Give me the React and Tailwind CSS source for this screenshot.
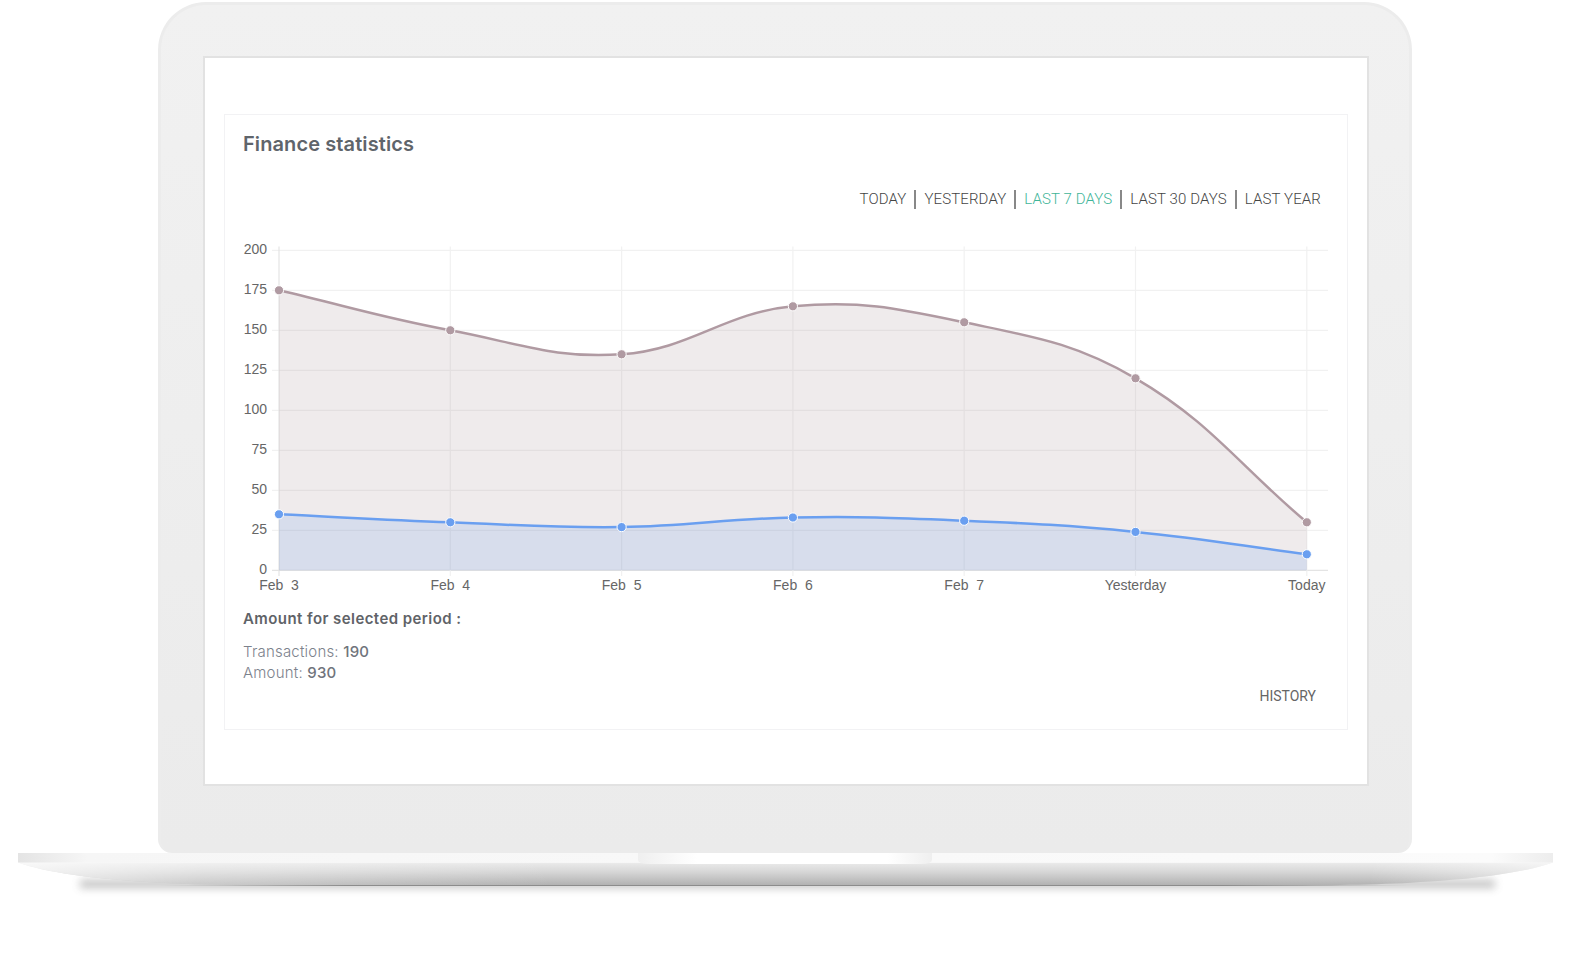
import React from 'react';

const sans = 'font-["Liberation_Sans",Arial,sans-serif]';

const tabs = ['TODAY', 'YESTERDAY', 'LAST 7 DAYS', 'LAST 30 DAYS', 'LAST YEAR'];
const yTicks = [200, 175, 150, 125, 100, 75, 50, 25, 0];
const labels = ['Feb  3', 'Feb  4', 'Feb  5', 'Feb  6', 'Feb  7', 'Yesterday', 'Today'];
const amounts = [175, 150, 135, 165, 155, 120, 30];
const counts = [35, 30, 27, 33, 31, 24, 10];

const xAt = (i) => 279 + i * 171.3;
const yAt = (v) => 570.3 - v * 1.6;

// same spline chart.js draws with tension 0.4
function linePath(values) {
    const pts = values.map((v, i) => ({ x: xAt(i), y: yAt(v) }));
    const ctrl = pts.map((p, i) => {
        const prev = pts[i - 1] || p;
        const next = pts[i + 1] || p;
        const d01 = Math.hypot(p.x - prev.x, p.y - prev.y);
        const d12 = Math.hypot(next.x - p.x, next.y - p.y);
        const s01 = d01 / (d01 + d12 || 1);
        const s12 = d12 / (d01 + d12 || 1);
        return {
            inX: p.x - 0.4 * s01 * (next.x - prev.x),
            inY: p.y - 0.4 * s01 * (next.y - prev.y),
            outX: p.x + 0.4 * s12 * (next.x - prev.x),
            outY: p.y + 0.4 * s12 * (next.y - prev.y),
        };
    });
    let d = `M${pts[0].x} ${pts[0].y}`;
    for (let i = 1; i < pts.length; i++) {
        d += ` C${ctrl[i - 1].outX} ${ctrl[i - 1].outY} ${ctrl[i].inX} ${ctrl[i].inY} ${pts[i].x} ${pts[i].y}`;
    }
    return d;
}

const areaPath = (values) => `${linePath(values)} L${xAt(6)} ${yAt(0)} L${xAt(0)} ${yAt(0)} Z`;

const Chart = () => (
    <svg viewBox="225 240 1122 360" className="block w-[1122px] h-[360px]">
        {yTicks.map((t) => (
            <g key={t}>
                <line x1="272" x2="1328" y1={yAt(t)} y2={yAt(t)} stroke={t === 0 ? '#e4e4e4' : '#f1f1f1'} strokeWidth="1.2" />
                <text x="267" y={yAt(t) + 3.5} textAnchor="end" fontSize="14" fill="#666" fontFamily="Liberation Sans, Arial, sans-serif">{t}</text>
            </g>
        ))}
        {labels.map((l, i) => (
            <g key={l}>
                <line x1={xAt(i)} x2={xAt(i)} y1="246.5" y2="576" stroke={i === 0 ? '#e4e4e4' : '#f1f1f1'} strokeWidth="1.2" />
                <text x={xAt(i)} y="590" textAnchor="middle" fontSize="14" fill="#666" fontFamily="Liberation Sans, Arial, sans-serif" className="whitespace-pre">{l}</text>
            </g>
        ))}
        <path d={areaPath(amounts)} fill="#b09aa2" fillOpacity="0.2" />
        <path d={areaPath(counts)} fill="#6a9ff0" fillOpacity="0.18" />
        <path d={linePath(amounts)} fill="none" stroke="#b09aa2" strokeWidth="2.5" />
        <path d={linePath(counts)} fill="none" stroke="#6a9ff0" strokeWidth="2.5" />
        {amounts.map((v, i) => (
            <circle key={i} cx={xAt(i)} cy={yAt(v)} r="4.6" fill="#b09aa2" stroke="#fff" strokeWidth="1" />
        ))}
        {counts.map((v, i) => (
            <circle key={i} cx={xAt(i)} cy={yAt(v)} r="4.6" fill="#6a9ff0" stroke="#fff" strokeWidth="1" />
        ))}
    </svg>
);

const LaptopBase = () => (
    <svg viewBox="0 853 1577 117" className="block w-[1577px] h-[117px]">
        <defs>
            <linearGradient id="baseFace" x1="0" y1="862" x2="0" y2="885" gradientUnits="userSpaceOnUse">
                <stop offset="0" stopColor="#ececec" />
                <stop offset="0.4" stopColor="#d8d8d8" />
                <stop offset="1" stopColor="#b2b2b2" />
            </linearGradient>
            <linearGradient id="baseEnds" x1="18" y1="0" x2="1553" y2="0" gradientUnits="userSpaceOnUse">
                <stop offset="0" stopColor="#fff" stopOpacity="0.7" />
                <stop offset="0.12" stopColor="#fff" stopOpacity="0.3" />
                <stop offset="0.35" stopColor="#fff" stopOpacity="0" />
                <stop offset="0.88" stopColor="#fff" stopOpacity="0" />
                <stop offset="1" stopColor="#fff" stopOpacity="0.55" />
            </linearGradient>
            <linearGradient id="baseLine" x1="160" y1="0" x2="1411" y2="0" gradientUnits="userSpaceOnUse">
                <stop offset="0" stopColor="#999" stopOpacity="0" />
                <stop offset="0.15" stopColor="#8c8c8c" />
                <stop offset="0.85" stopColor="#8c8c8c" />
                <stop offset="1" stopColor="#999" stopOpacity="0" />
            </linearGradient>
            <linearGradient id="baseStrip" x1="18" y1="0" x2="1553" y2="0" gradientUnits="userSpaceOnUse">
                <stop offset="0" stopColor="#e4e4e4" />
                <stop offset="0.045" stopColor="#f6f6f6" />
                <stop offset="0.96" stopColor="#fbfbfb" />
                <stop offset="1" stopColor="#ededed" />
            </linearGradient>
            <linearGradient id="notch" x1="638" y1="0" x2="932" y2="0" gradientUnits="userSpaceOnUse">
                <stop offset="0" stopColor="#efefef" />
                <stop offset="0.2" stopColor="#fff" />
                <stop offset="0.85" stopColor="#fff" />
                <stop offset="1" stopColor="#efefef" />
            </linearGradient>
            <filter id="blur" x="-5%" y="-300%" width="110%" height="700%">
                <feGaussianBlur stdDeviation="4.5" />
            </filter>
        </defs>
        <rect x="80" y="880" width="1415" height="8" fill="#777" opacity="0.45" filter="url(#blur)" />
        <path d="M18 862.5 C45 872 90 879 160 882.7 C200 885 260 885.5 300 885.5 H1270 C1310 885.5 1370 885 1411 882.7 C1481 879 1526 872 1553 862.5 Z" fill="url(#baseFace)" />
        <path d="M18 862.5 C45 872 90 879 160 882.7 C200 885 260 885.5 300 885.5 H1270 C1310 885.5 1370 885 1411 882.7 C1481 879 1526 872 1553 862.5 Z" fill="url(#baseEnds)" />
        <path d="M160 885.5 H1411" stroke="url(#baseLine)" strokeWidth="1" />
        <rect x="18" y="853" width="1535" height="9.5" fill="url(#baseStrip)" />
        <path d="M638 853 H932 V860 Q932 864 920 864 H650 Q638 864 638 860 Z" fill="url(#notch)" />
    </svg>
);

export default function App() {
    return (
        <div className={`w-[1577px] h-[970px] bg-white overflow-hidden pt-[2px] ${sans}`}>
            <div className="ml-[158px] w-[1254px] h-[851px] rounded-t-[48px] rounded-b-[14px] border-[3px] border-b-0 border-[#ececec] bg-linear-to-b from-[#f1f1f1] to-[#ebebeb] pt-[51px] pl-[42px]">
                <div className="w-[1166px] h-[730px] border-2 border-[#e2e2e2] bg-white pt-[56px] pl-[19px]">
                    <div className="w-[1124px] h-[616px] border border-[#f2f2f4] pt-[15px]">
                        <h2 className="pl-[18px] h-[28px] font-['Inter',sans-serif] font-semibold text-[20px] tracking-[0.1px] leading-[28px] text-[#5f656b]">
                            Finance statistics
                        </h2>
                        <div className="mt-[31px] pr-[26px] flex justify-end font-['Roboto',sans-serif] font-light text-[15px] tracking-[0.12px] leading-[20px] h-[20px] text-[#444]">
                            {tabs.map((tab, i) => (
                                <span
                                    key={tab}
                                    className={`flex items-center ${i === 2 ? 'text-[#3fb599]' : ''}`}
                                >
                                    {tab}
                                    {i < tabs.length - 1 && <span className="mx-[8px] w-[2px] h-[19px] bg-[#888]" />}
                                </span>
                            ))}
                        </div>
                        <div className="mt-[31px]">
                            <Chart />
                        </div>
                        <div className="mt-[7px] pl-[18px] font-['Inter',sans-serif]">
                            <p className="h-[24px] leading-[24px] text-[15px] tracking-[0.43px] font-semibold text-[#5f6368]">Amount for selected period :</p>
                            <div className="mt-[10px] text-[15px] tracking-[0.2px] leading-[21px] font-light text-[#7c828c]">
                                <p>Transactions: <span className="font-medium text-[#70747c]">190</span></p>
                                <p>Amount: <span className="font-medium text-[#70747c]">930</span></p>
                            </div>
                        </div>
                        <div className="mt-[3px] pr-[31px] flex justify-end font-['Roboto',sans-serif] text-[14px] leading-[20px] text-[#666]">
                            HISTORY
                        </div>
                    </div>
                </div>
            </div>
            <LaptopBase />
        </div>
    );
}
